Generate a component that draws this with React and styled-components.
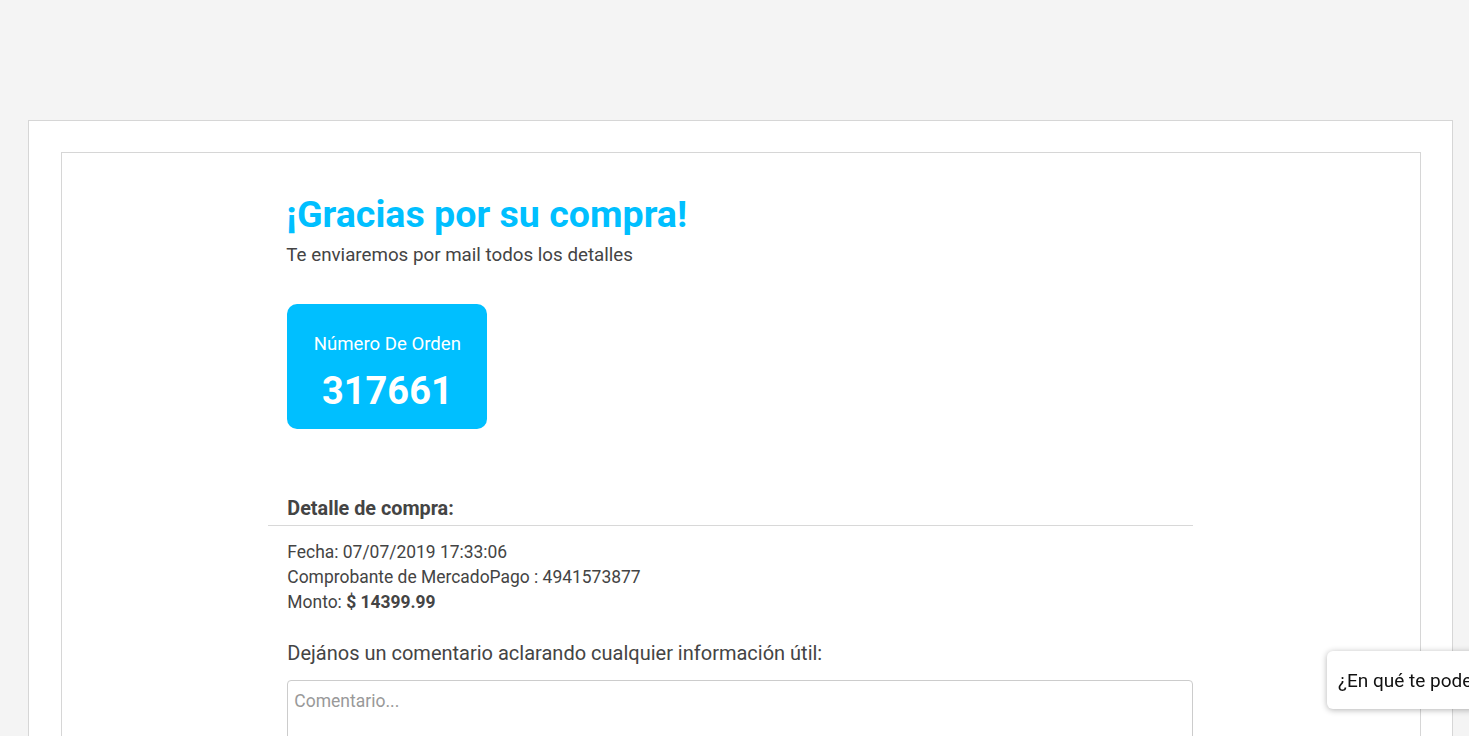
import React from 'react';
import styled, { createGlobalStyle } from 'styled-components';

const GlobalStyle = createGlobalStyle`
  html, body {
    margin: 0;
    padding: 0;
    background: #f4f4f4;
    font-family: Roboto, "Liberation Sans", sans-serif;
    color: #444;
  }
  body {
    overflow: hidden;
  }
`

const Page = styled.div`
  padding: 120px 16px 0 28px;
`

const Outer = styled.div`
  background: #fff;
  border: 1px solid #d6d6d6;
  padding: 31px 31px 0 32px;
  min-height: 700px;
`

const Inner = styled.div`
  border: 1px solid #d6d6d6;
  border-bottom: none;
  min-height: 680px;
  display: grid;
  grid-template-columns: 2fr 8fr 2fr;
`

const Column = styled.div`
  grid-column: 2;
  padding-top: 38px;
  margin: 0 1px 0 -1px;
`

const Title = styled.h1`
  margin: 0 0 0 -1px;
  font-size: 37.6px;
  font-weight: 700;
  line-height: 46px;
  color: #00bfff;
`

const Subtitle = styled.p`
  margin: 6px 0 0 -1px;
  font-size: 18.75px;
  line-height: 24px;
  color: #444;
`

const OrderBox = styled.div`
  margin-top: 37px;
  width: 200px;
  height: 125px;
  box-sizing: border-box;
  padding-top: 29px;
  border-radius: 10px;
  background: #00bfff;
  color: #fff;
  display: flex;
  flex-direction: column;
  align-items: center;
  gap: 13px;
`

const OrderLabel = styled.span`
  font-size: 18.6px;
  line-height: 22px;
`

const OrderNumber = styled.span`
  font-size: 38px;
  font-weight: 700;
  line-height: 46px;
`

const SectionTitle = styled.h3`
  margin: 68px 0 0;
  font-size: 19.8px;
  font-weight: 700;
  line-height: 24px;
  color: #444;
`

const Divider = styled.hr`
  margin: 4px 0 14px -19px;
  border: none;
  border-top: 1px solid #d8d8d8;
`

const DetailLine = styled.div`
  font-size: 17.45px;
  line-height: 25px;
  color: #444;
`

const CommentLabel = styled.label`
  display: block;
  margin-top: 25px;
  font-size: 20px;
  line-height: 26px;
  color: #444;
`

const Comment = styled.textarea`
  display: block;
  box-sizing: border-box;
  margin-top: 14px;
  width: 100%;
  height: 110px;
  border: 1px solid #ccc;
  border-radius: 4px;
  padding: 10px 6px;
  font-family: Roboto, "Liberation Sans", sans-serif;
  font-size: 17.5px;
  color: #444;
  resize: none;
  &::placeholder {
    color: #999;
  }
`

const ChatBubble = styled.div`
  position: fixed;
  left: 1327px;
  top: 651px;
  height: 58px;
  padding: 0 12px 0 11px;
  display: flex;
  align-items: center;
  background: #fff;
  border-radius: 6px;
  box-shadow: 0 1px 6px rgba(0, 0, 0, 0.3);
  font-size: 19px;
  color: #111;
  white-space: nowrap;
`

const App = () => {
  return <Page>
      <GlobalStyle />
      <Outer>
          <Inner>
              <Column>
                  <Title>¡Gracias por su compra!</Title>
                  <Subtitle>Te enviaremos por mail todos los detalles</Subtitle>
                  <OrderBox>
                      <OrderLabel>Número De Orden</OrderLabel>
                      <OrderNumber>317661</OrderNumber>
                  </OrderBox>
                  <SectionTitle>Detalle de compra:</SectionTitle>
                  <Divider />
                  <DetailLine>Fecha: 07/07/2019 17:33:06</DetailLine>
                  <DetailLine>Comprobante de MercadoPago : 4941573877</DetailLine>
                  <DetailLine>Monto: <b>$ 14399.99</b></DetailLine>
                  <CommentLabel>Dejános un comentario aclarando cualquier información útil:</CommentLabel>
                  <Comment placeholder="Comentario..." />
              </Column>
          </Inner>
      </Outer>
      <ChatBubble>¿En qué te podemos ayudar?</ChatBubble>
  </Page>;
};

export default App;
